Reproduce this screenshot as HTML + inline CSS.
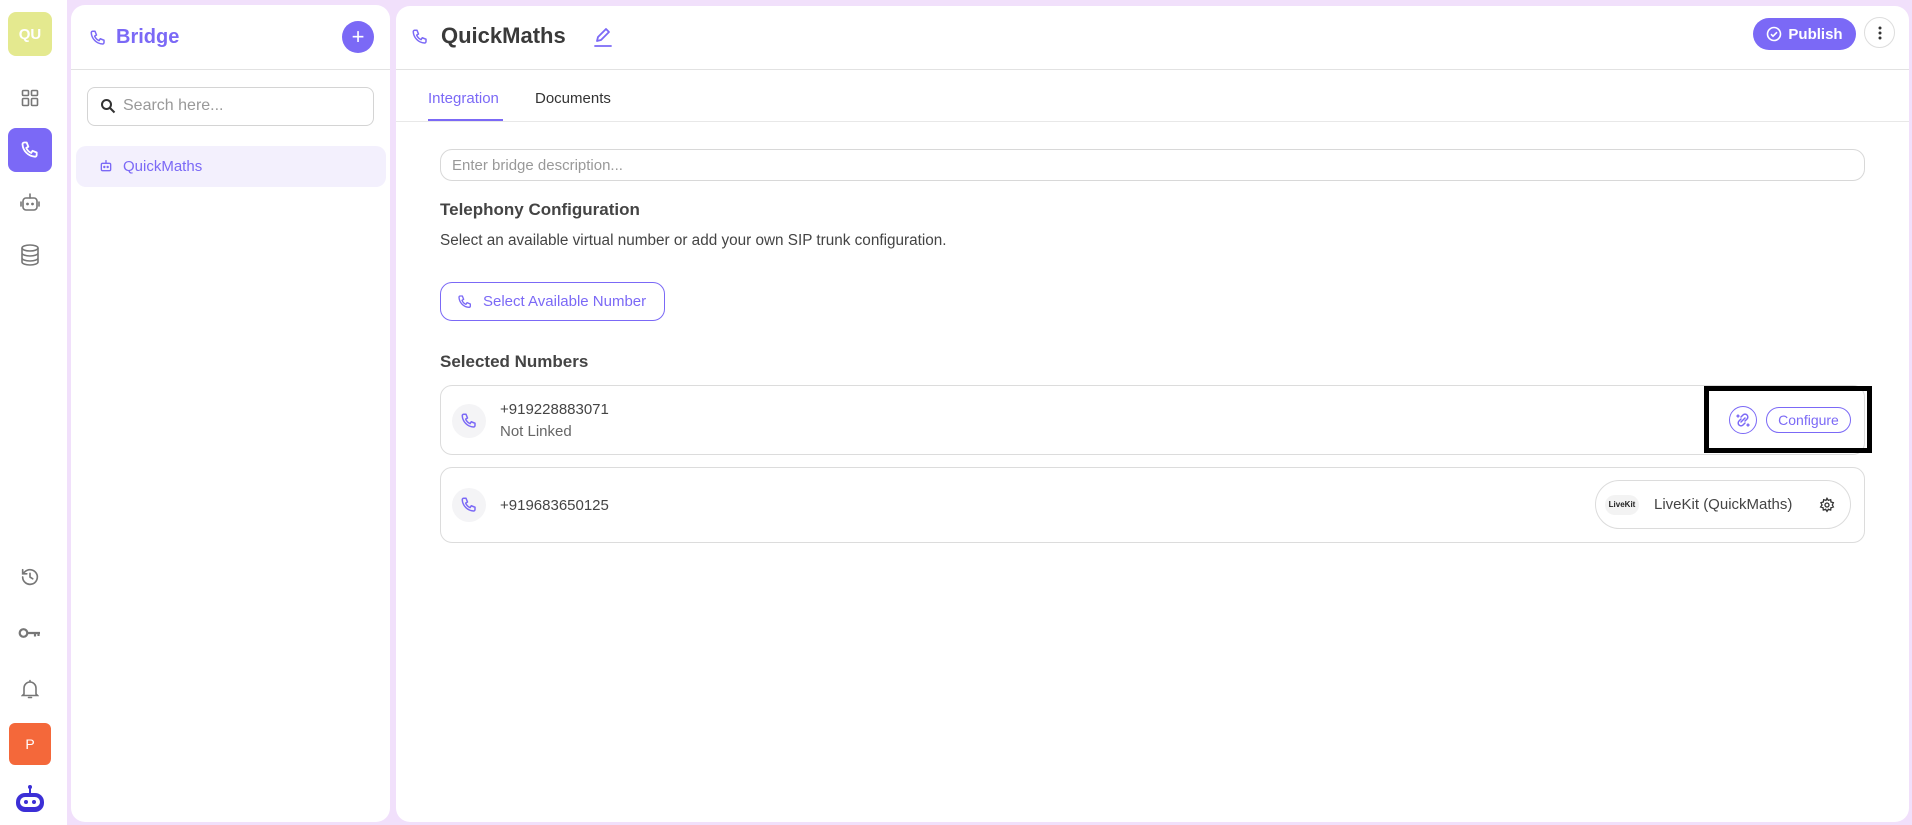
<!DOCTYPE html>
<html><head><meta charset="utf-8"><style>
*{box-sizing:border-box;margin:0;padding:0}
body{width:1912px;height:825px;background:#f1e0fb;font-family:"Liberation Sans",sans-serif;position:relative;overflow:hidden;color:#333}
.abs{position:absolute}
.rail{left:0;top:0;width:67px;height:825px;background:#fff}
.panel{background:#fff;border-radius:14px}
.ico{position:absolute;display:flex;align-items:center;justify-content:center}
svg{display:block}
</style></head><body>
<div class="abs rail"></div>
<div class="abs" style="left:8px;top:12px;width:44px;height:44px;border-radius:8px;background:#e4e98f;color:#fff;font-weight:bold;font-size:15px;display:flex;align-items:center;justify-content:center">QU</div>
<div class="ico" style="left:18px;top:88px;width:24px;height:20px"><svg width="18" height="18" viewBox="0 0 18 18" fill="none" stroke="#777" stroke-width="1.6"><rect x="1.5" y="1.5" width="6" height="5" rx="1"/><rect x="10.5" y="1.5" width="6" height="5" rx="1"/><rect x="1.5" y="9.5" width="6" height="7" rx="1"/><rect x="10.5" y="9.5" width="6" height="7" rx="1"/></svg></div>
<div class="abs" style="left:8px;top:128px;width:44px;height:44px;border-radius:8px;background:#7b69f6"></div>
<div class="ico" style="left:8px;top:128px;width:44px;height:44px"><svg width="20" height="20" viewBox="0 0 24 24" fill="none" stroke="#fff" stroke-width="2.2" stroke-linecap="round" stroke-linejoin="round"><path d="M5 3h3l2 5-2.5 1.5a11 11 0 0 0 6 6L15 13l5 2v3a2 2 0 0 1-2 2A16 16 0 0 1 3 5a2 2 0 0 1 2-2"/></svg></div>
<div class="ico" style="left:17px;top:190px;width:26px;height:26px"><svg width="24" height="24" viewBox="0 0 24 24" fill="none" stroke="#777" stroke-width="1.6" stroke-linecap="round"><rect x="5" y="7" width="14" height="12" rx="3"/><path d="M12 7V3M3 11v4M21 11v4"/><circle cx="9.5" cy="13" r=".6" fill="#777"/><circle cx="14.5" cy="13" r=".6" fill="#777"/></svg></div>
<div class="ico" style="left:17px;top:242px;width:26px;height:26px"><svg width="22" height="24" viewBox="0 0 22 24" fill="none" stroke="#777" stroke-width="1.6"><ellipse cx="11" cy="5" rx="8" ry="3"/><path d="M3 5v14c0 1.7 3.6 3 8 3s8-1.3 8-3V5M3 10c0 1.7 3.6 3 8 3s8-1.3 8-3M3 15c0 1.7 3.6 3 8 3s8-1.3 8-3"/></svg></div>
<div class="ico" style="left:18px;top:565px;width:24px;height:24px"><svg width="22" height="22" viewBox="0 0 24 24" fill="none" stroke="#777" stroke-width="1.8" stroke-linecap="round"><path d="M4 12a8 8 0 1 0 2.5-5.8L4 8.5M4 4v4.5h4.5M12 8v4l3 2"/></svg></div>
<div class="ico" style="left:17px;top:622px;width:26px;height:22px"><svg width="24" height="14" viewBox="0 0 24 14" fill="none" stroke="#777" stroke-width="2.2"><circle cx="5.5" cy="7" r="3.8"/><path d="M9.5 7H22M17 7v3.5M20.5 7v3"/></svg></div>
<div class="ico" style="left:18px;top:677px;width:24px;height:24px"><svg width="18" height="20" viewBox="0 0 18 20" fill="none" stroke="#777" stroke-width="1.6" stroke-linecap="round"><path d="M3 15V9a6 6 0 0 1 12 0v6l1.5 1.5h-15zM7.5 18.5h3M9 1.5v1.5"/></svg></div>
<div class="abs" style="left:9px;top:723px;width:42px;height:42px;border-radius:6px;background:#f4683a;color:#fff;font-size:14px;display:flex;align-items:center;justify-content:center">P</div>
<div class="ico" style="left:13px;top:782px;width:34px;height:34px"><svg width="32" height="30" viewBox="0 0 32 30"><circle cx="16" cy="3" r="2" fill="#3c2fd6"/><rect x="15" y="3" width="2" height="6" fill="#3c2fd6"/><rect x="2" y="9" width="28" height="19" rx="9" fill="#3c2fd6"/><rect x="6" y="13" width="20" height="10" rx="5" fill="#fff"/><circle cx="12" cy="18" r="2" fill="#3c2fd6"/><circle cx="20" cy="18" r="2" fill="#3c2fd6"/></svg></div>

<div class="abs panel" style="left:71px;top:5px;width:319px;height:817px"></div>
<div class="abs" style="left:71px;top:69px;width:319px;height:1px;background:#e2e2e2"></div>
<div class="ico" style="left:88px;top:28px;width:20px;height:20px"><svg width="18" height="18" viewBox="0 0 24 24" fill="none" stroke="#7b69f6" stroke-width="2" stroke-linecap="round" stroke-linejoin="round"><path d="M5 3h3l2 5-2.5 1.5a11 11 0 0 0 6 6L15 13l5 2v3a2 2 0 0 1-2 2A16 16 0 0 1 3 5a2 2 0 0 1 2-2"/></svg></div>
<div class="abs" style="left:116px;top:26px;font-size:20px;font-weight:bold;color:#7b69f6">Bridge</div>
<div class="abs" style="left:342px;top:21px;width:32px;height:32px;border-radius:50%;background:#7b69f6;color:#fff;font-size:22px;line-height:31px;text-align:center">+</div>
<div class="abs" style="left:87px;top:87px;width:287px;height:39px;border:1px solid #d4d4d4;border-radius:8px"></div>
<div class="ico" style="left:98px;top:96px;width:20px;height:20px"><svg width="16" height="16" viewBox="0 0 16 16" fill="none" stroke="#333" stroke-width="2"><circle cx="6.5" cy="6.5" r="4.5"/><path d="M10 10l4.5 4.5"/></svg></div>
<div class="abs" style="left:123px;top:97px;font-size:16px;color:#999">Search here...</div>
<div class="abs" style="left:76px;top:146px;width:310px;height:41px;border-radius:10px;background:#f3f0fd"></div>
<div class="ico" style="left:97px;top:157px;width:18px;height:18px"><svg width="16" height="16" viewBox="0 0 24 24" fill="none" stroke="#7b69f6" stroke-width="2" stroke-linecap="round"><rect x="5" y="8" width="14" height="11" rx="2"/><path d="M12 8V4"/><circle cx="9.5" cy="13.5" r=".8" fill="#7b69f6"/><circle cx="14.5" cy="13.5" r=".8" fill="#7b69f6"/></svg></div>
<div class="abs" style="left:123px;top:158px;font-size:15px;color:#7b69f6">QuickMaths</div>

<div class="abs panel" style="left:396px;top:6px;width:1513px;height:816px"></div>
<div class="abs" style="left:396px;top:69px;width:1513px;height:1px;background:#e2e2e2"></div>
<div class="ico" style="left:410px;top:27px;width:20px;height:20px"><svg width="18" height="18" viewBox="0 0 24 24" fill="none" stroke="#7b69f6" stroke-width="2" stroke-linecap="round" stroke-linejoin="round"><path d="M5 3h3l2 5-2.5 1.5a11 11 0 0 0 6 6L15 13l5 2v3a2 2 0 0 1-2 2A16 16 0 0 1 3 5a2 2 0 0 1 2-2"/></svg></div>
<div class="abs" style="left:441px;top:23px;font-size:22px;font-weight:bold;color:#3a3a3a">QuickMaths</div>
<div class="ico" style="left:592px;top:25px;width:22px;height:24px"><svg width="20" height="22" viewBox="0 0 20 22" fill="none" stroke="#7b69f6" stroke-width="1.8" stroke-linecap="round" stroke-linejoin="round"><path d="M4 15l1-4 8-8 3 3-8 8zM2 20h16"/></svg></div>
<div class="abs" style="left:1753px;top:18px;width:103px;height:32px;border-radius:16px;background:#7b69f6;color:#fff;font-size:15px;font-weight:bold;display:flex;align-items:center;justify-content:center;gap:6px"><svg width="16" height="16" viewBox="0 0 16 16" fill="none" stroke="#fff" stroke-width="1.6"><circle cx="8" cy="8" r="6.5"/><path d="M5 8.2l2 2 4-4"/></svg>Publish</div>
<div class="abs" style="left:1864px;top:17px;width:31px;height:31px;border-radius:50%;border:1px solid #ddd;display:flex;align-items:center;justify-content:center"><svg width="4" height="14" viewBox="0 0 4 14" fill="#333"><circle cx="2" cy="2" r="1.5"/><circle cx="2" cy="7" r="1.5"/><circle cx="2" cy="12" r="1.5"/></svg></div>

<div class="abs" style="left:428px;top:90px;font-size:15px;color:#7b69f6">Integration</div>
<div class="abs" style="left:535px;top:90px;font-size:15px;color:#333">Documents</div>
<div class="abs" style="left:396px;top:121px;width:1513px;height:1px;background:#e8e8e8"></div>
<div class="abs" style="left:428px;top:119px;width:75px;height:2px;background:#7b69f6"></div>

<div class="abs" style="left:440px;top:149px;width:1425px;height:32px;border:1px solid #d8d8d8;border-radius:12px"></div>
<div class="abs" style="left:452px;top:157px;font-size:15px;color:#999">Enter bridge description...</div>
<div class="abs" style="left:440px;top:200px;font-size:17px;font-weight:bold;color:#444">Telephony Configuration</div>
<div class="abs" style="left:440px;top:232px;font-size:15.3px;color:#444">Select an available virtual number or add your own SIP trunk configuration.</div>
<div class="abs" style="left:440px;top:282px;width:225px;height:39px;border:1px solid #7b69f6;border-radius:12px;display:flex;align-items:center;padding-left:16px;gap:10px;color:#7b69f6;font-size:15px"><svg width="16" height="16" viewBox="0 0 24 24" fill="none" stroke="#7b69f6" stroke-width="2" stroke-linecap="round" stroke-linejoin="round"><path d="M5 3h3l2 5-2.5 1.5a11 11 0 0 0 6 6L15 13l5 2v3a2 2 0 0 1-2 2A16 16 0 0 1 3 5a2 2 0 0 1 2-2"/></svg>Select Available Number</div>
<div class="abs" style="left:440px;top:352px;font-size:17px;font-weight:bold;color:#444">Selected Numbers</div>

<div class="abs" style="left:440px;top:385px;width:1425px;height:70px;border:1px solid #dcdcdc;border-radius:12px"></div>
<div class="abs" style="left:452px;top:404px;width:34px;height:34px;border-radius:50%;background:#f4f4f6;display:flex;align-items:center;justify-content:center"><svg width="18" height="18" viewBox="0 0 24 24" fill="none" stroke="#7b69f6" stroke-width="2" stroke-linecap="round" stroke-linejoin="round"><path d="M5 3h3l2 5-2.5 1.5a11 11 0 0 0 6 6L15 13l5 2v3a2 2 0 0 1-2 2A16 16 0 0 1 3 5a2 2 0 0 1 2-2"/></svg></div>
<div class="abs" style="left:500px;top:401px;font-size:15px;color:#444">+919228883071</div>
<div class="abs" style="left:500px;top:423px;font-size:15px;color:#666">Not Linked</div>
<div class="abs" style="left:1704px;top:386px;width:168px;height:67px;border:5px solid #000"></div>
<div class="abs" style="left:1729px;top:406px;width:28px;height:28px;border-radius:50%;border:1px solid #7b69f6;display:flex;align-items:center;justify-content:center"><svg width="16" height="16" viewBox="0 0 16 16" fill="none" stroke="#7b69f6" stroke-width="1.5" stroke-linecap="round"><path d="M6 5l2-2a2.8 2.8 0 0 1 4 4l-2 2M10 11l-2 2a2.8 2.8 0 0 1-4-4l2-2M6 10l4-4M3 3v2M2 4h2M13 12v2M12 13h2"/></svg></div>
<div class="abs" style="left:1766px;top:407px;width:85px;height:26px;border-radius:13px;border:1px solid #7b69f6;color:#7b69f6;font-size:14px;text-align:center;line-height:24px">Configure</div>

<div class="abs" style="left:440px;top:467px;width:1425px;height:76px;border:1px solid #dcdcdc;border-radius:12px"></div>
<div class="abs" style="left:452px;top:488px;width:34px;height:34px;border-radius:50%;background:#f4f4f6;display:flex;align-items:center;justify-content:center"><svg width="18" height="18" viewBox="0 0 24 24" fill="none" stroke="#7b69f6" stroke-width="2" stroke-linecap="round" stroke-linejoin="round"><path d="M5 3h3l2 5-2.5 1.5a11 11 0 0 0 6 6L15 13l5 2v3a2 2 0 0 1-2 2A16 16 0 0 1 3 5a2 2 0 0 1 2-2"/></svg></div>
<div class="abs" style="left:500px;top:497px;font-size:15px;color:#444">+919683650125</div>
<div class="abs" style="left:1595px;top:480px;width:256px;height:49px;border-radius:25px;border:1px solid #dcdcdc"></div>
<div class="abs" style="left:1605px;top:495px;width:34px;height:20px;border-radius:10px;background:#f3f3f3;font-size:8px;font-weight:bold;color:#222;text-align:center;line-height:20px">LiveKit</div>
<div class="abs" style="left:1654px;top:496px;font-size:15px;color:#444">LiveKit (QuickMaths)</div>
<div class="ico" style="left:1817px;top:495px;width:20px;height:20px"><svg width="16" height="16" viewBox="0 0 24 24" fill="none" stroke="#333" stroke-width="2"><circle cx="12" cy="12" r="3"/><path d="M12 2l2 3 3.5-1 .5 3.5 3.5 1-1.5 3.5 1.5 3-3.5 1-.5 3.5-3.5-1-2 3-2-3-3.5 1-.5-3.5-3.5-1L4.5 12 3 8.5l3.5-1L7 4l3.5 1z"/></svg></div>
</body></html>
